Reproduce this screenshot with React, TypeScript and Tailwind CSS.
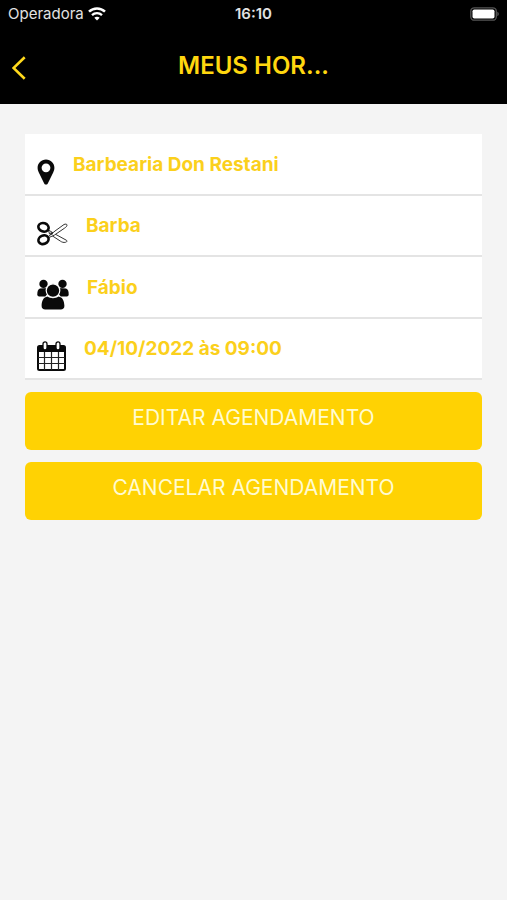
import type { ReactNode } from "react";

function PinIcon() {
  return (
    <svg width="18" height="26" viewBox="0 0 18 26" aria-hidden="true">
      <path
        fillRule="evenodd"
        d="M9 0.5C4.2 0.5 0.6 4.2 0.6 8.8c0 1.8.5 3.2 1.2 4.6l5.4 11c.8 1.6 2.8 1.6 3.6 0l5.4-11c.7-1.4 1.2-2.8 1.2-4.6C17.400 4.200 13.800 0.500 9 0.500ZM9 4.400a4.400 4.400 0 1 1 0 8.800a4.400 4.400 0 0 1 0-8.800Z"
        fill="#0a0a0a"
      />
    </svg>
  );
}

function ScissorsIcon() {
  return (
    <svg width="31" height="25" viewBox="0 0 31 25" fill="none" aria-hidden="true">
      <g stroke="#333" strokeWidth="1" strokeLinejoin="round" fill="#fff">
        <path d="M11.500 9 L18 13 L29.500 19.300 C30.300 20 29.800 21.200 28.500 21.300 C26.500 21.700 25 21.200 23.500 20.200 L12.500 13Z" />
        <path d="M11.500 15.500 L18 10 L27 3.500 C28.500 2.800 30 3 30 4.100 C30 5.200 29 6.200 27.500 7.200 L17.500 14 L12.500 16.300Z" />
      </g>
      <circle cx="14.500" cy="12.500" r="1.300" fill="#222" />
      <ellipse cx="6.500" cy="6.300" rx="5.200" ry="4.200" transform="rotate(18 6.500 6.300)" stroke="#0a0a0a" strokeWidth="2.600" />
      <ellipse cx="6.500" cy="18.700" rx="5.200" ry="4.200" transform="rotate(-25 6.500 18.700)" stroke="#0a0a0a" strokeWidth="2.600" />
    </svg>
  );
}

function PeopleIcon() {
  return (
    <svg width="32" height="31" viewBox="0 0 32 31" fill="#0a0a0a" aria-hidden="true">
      <circle cx="6.500" cy="4.900" r="4.200" />
      <circle cx="25.500" cy="4.900" r="4.200" />
      <path d="M3 9.500C1 10 .300 12.500.300 15.500c0 1.500 1.200 2 2.500 2h5.500l3-4-1-4.500Z" />
      <path d="M29 9.500c2 .500 2.700 3 2.700 6 0 1.500-1.200 2-2.500 2h-5.500l-3-4 1-4.500Z" />
      <circle cx="16" cy="11.600" r="6.800" stroke="#fff" strokeWidth="1.200" />
      <path d="M10.500 17.500c-4 .700-5.700 4-5.900 9.300-.100 2.500 1.500 3.700 3.600 3.700h15.600c2.100 0 3.700-1.200 3.600-3.700-.200-5.300-1.900-8.600-5.900-9.300-1.500 1-3.300 1.700-5.500 1.700s-4-.700-5.500-1.700Z" />
    </svg>
  );
}

function CalendarIcon() {
  return (
    <svg width="29" height="30" viewBox="0 0 29 30" aria-hidden="true">
      <rect x="1" y="5" width="27" height="24" rx="1.500" fill="#fff" stroke="#0a0a0a" strokeWidth="2" />
      <path d="M1 5h27v6H1Z" fill="#0a0a0a" />
      <path d="M7.500 11v18M14.500 11v18M21.500 11v18M1 16.500h27M1 22.500h27" stroke="#222" strokeWidth="1.200" />
      <rect x="6" y="0.900" width="4" height="8" rx="2" fill="#fff" stroke="#0a0a0a" strokeWidth="1.300" />
      <rect x="19" y="0.900" width="4" height="8" rx="2" fill="#fff" stroke="#0a0a0a" strokeWidth="1.300" />
    </svg>
  );
}

function DetailRow({ icon, children }: { icon: ReactNode; children: ReactNode }) {
  return (
    <li className="flex items-center gap-[18px] border-b-2 border-[#e4e4e4] bg-white px-3">
      <span className="pt-4">{icon}</span>
      <span className="pt-0.5 text-[19px] leading-7 font-bold text-[#fbd01c]">{children}</span>
    </li>
  );
}

function ActionButton({ children }: { children: ReactNode }) {
  return (
    <button
      type="button"
      className="w-full rounded-md bg-[#ffd203] pt-3 pb-[18px] text-[21px] leading-7 text-[#fffbd0]"
    >
      {children}
    </button>
  );
}

export default function App() {
  return (
    <div className="min-h-screen bg-[#f4f4f4] font-['Inter','Liberation_Sans',sans-serif]">
      <header className="bg-black pb-[22px]">
        <div className="grid grid-cols-3 items-center px-2 pt-1 text-[15px] leading-5 text-[#e2e2e2]">
          <div className="flex items-center gap-1">
            <span>Operadora</span>
            <svg width="18" height="14" viewBox="0 0 18 14" fill="none" stroke="#fff" aria-label="Wi-Fi">
              <path d="M1 4.700C5.500.300 12.500.300 17 4.700" strokeWidth="2.500" />
              <path d="M4 8.200c2.800-2.700 7.200-2.700 10 0" strokeWidth="2.300" />
              <path d="M6.300 10.700c1.500-1.400 3.900-1.400 5.400 0L9 13.500Z" fill="#fff" stroke="none" />
            </svg>
          </div>
          <time className="text-center font-semibold">16:10</time>
          <svg className="justify-self-end" width="30" height="14" viewBox="0 0 30 14" fill="none" aria-label="Bateria">
            <rect x="1.800" y="0.800" width="25.500" height="12.400" rx="3.500" stroke="#555" strokeWidth="1.300" />
            <rect x="3.500" y="2.500" width="22" height="9" rx="1.800" fill="#fff" />
            <path d="M28.300 4.800c2 .700 2 3.700 0 4.400Z" fill="#555" />
          </svg>
        </div>
        <div className="grid grid-cols-[1fr_auto_1fr] items-center px-3 pt-[26px]">
          <button type="button" aria-label="Voltar" className="justify-self-start pt-1">
            <svg width="14" height="24" viewBox="0 0 14 24" fill="none">
              <path d="M12.700 1.200 1.500 12l11.200 10.800" stroke="#ffd91c" strokeWidth="2.600" />
            </svg>
          </button>
          <h1 className="text-2xl leading-8 font-semibold text-[#ffd70f]">MEUS HOR...</h1>
        </div>
      </header>
      <main className="flex flex-col gap-3 px-[25px] pt-[30px]">
        <ul className="grid h-[246px] auto-rows-fr">
          <DetailRow icon={<PinIcon />}>Barbearia Don Restani</DetailRow>
          <DetailRow icon={<ScissorsIcon />}>Barba</DetailRow>
          <DetailRow icon={<PeopleIcon />}>Fábio</DetailRow>
          <DetailRow icon={<CalendarIcon />}>04/10/2022 às 09:00</DetailRow>
        </ul>
        <ActionButton>EDITAR AGENDAMENTO</ActionButton>
        <ActionButton>CANCELAR AGENDAMENTO</ActionButton>
      </main>
    </div>
  );
}
